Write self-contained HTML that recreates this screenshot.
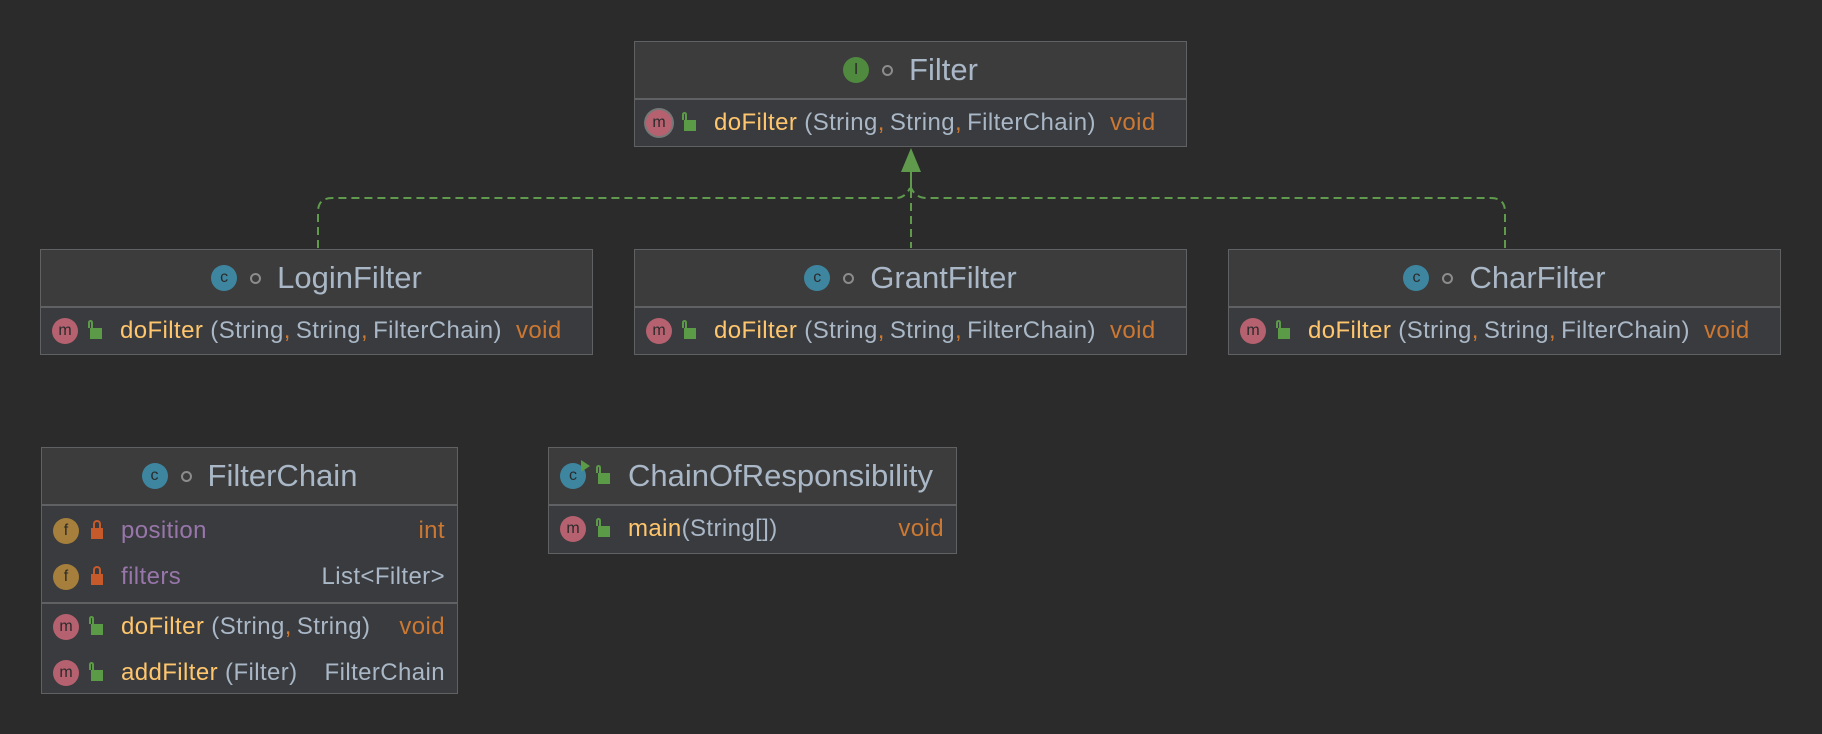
<!DOCTYPE html>
<html><head><meta charset="utf-8"><style>
body{margin:0;width:1822px;height:734px;background:#2b2b2b;overflow:hidden;font-family:"Liberation Sans",sans-serif;position:relative}
.box{position:absolute;border:1px solid #5f6163;background:#393b3e;box-sizing:border-box}
.hd{background:#3c3c3c;border-bottom:2px solid #5f6163;display:flex;align-items:center;justify-content:center;color:#a9b7c6;font-size:31px;box-sizing:border-box}
.row{display:flex;align-items:center;font-size:24px;letter-spacing:0.4px;color:#a9b7c6;white-space:nowrap;position:relative}
.ic{width:26px;height:26px;border-radius:50%;display:inline-flex;align-items:center;justify-content:center;color:#2b2b2b;font-size:16px;flex:none;letter-spacing:0}
.c{background:#3e86a0}.i{background:#4f8a3f}.m{background:#b6616f}.f{background:#a67f3c}
.dot{width:7px;height:7px;border:2px solid #8c8c8c;border-radius:50%;margin:0 16px 0 13px}
.lk{width:12px;height:11px;background:#5b9a46;position:relative;flex:none;margin:4px 0 0 0}
.lk:before{content:"";position:absolute;left:-2px;top:-8px;width:5px;height:8px;border:2px solid #5b9a46;border-bottom:none;border-radius:4px 4px 0 0;box-sizing:border-box}
.lk.r{background:#c75a2a}.lk.r:before{border-color:#c75a2a;left:2px;width:8px}
.y{color:#ffc66d}.o{color:#cc7832}.p{color:#9876aa}
.rt{position:absolute;right:12px}
.g1{width:12px}.g2{width:18px}
.cm{margin-right:5px}
</style></head><body>
<svg width="1822" height="734" style="position:absolute;left:0;top:0">
<g stroke="#5f9a4d" stroke-width="2" fill="none">
<path d="M318 248 V212 Q318 198 332 198 H896 Q905 198 910 188" stroke-dasharray="8 5"/>
<path d="M1505 248 V212 Q1505 198 1491 198 H926 Q916 198 911 188" stroke-dasharray="8 5"/>
<path d="M911 190 V248" stroke-dasharray="8 5"/>
<path d="M911 172 V190"/>
</g>
<polygon points="911,148 901,172 921,172" fill="#5f9a4d"/>
</svg>

<div class="box" style="left:634px;top:41px;width:553px;height:106px">
<div class="hd" style="height:58px"><span class="ic i">I</span><span class="dot"></span>Filter</div>
<div class="row" style="height:46px;padding-left:11px"><span class="ic m" style="box-shadow:0 0 0 2px #777">m</span><span class="g1"></span><span class="lk"></span><span class="g2"></span><span class="y">doFilter</span>&nbsp;(String<span class="o cm">,</span>String<span class="o cm">,</span>FilterChain)&nbsp;&nbsp;<span class="o">void</span></div>
</div>

<div class="box" style="left:40px;top:249px;width:553px;height:106px">
<div class="hd" style="height:58px"><span class="ic c">c</span><span class="dot"></span>LoginFilter</div>
<div class="row" style="height:46px;padding-left:11px"><span class="ic m">m</span><span class="g1"></span><span class="lk"></span><span class="g2"></span><span class="y">doFilter</span>&nbsp;(String<span class="o cm">,</span>String<span class="o cm">,</span>FilterChain)&nbsp;&nbsp;<span class="o">void</span></div>
</div>

<div class="box" style="left:634px;top:249px;width:553px;height:106px">
<div class="hd" style="height:58px"><span class="ic c">c</span><span class="dot"></span>GrantFilter</div>
<div class="row" style="height:46px;padding-left:11px"><span class="ic m">m</span><span class="g1"></span><span class="lk"></span><span class="g2"></span><span class="y">doFilter</span>&nbsp;(String<span class="o cm">,</span>String<span class="o cm">,</span>FilterChain)&nbsp;&nbsp;<span class="o">void</span></div>
</div>

<div class="box" style="left:1228px;top:249px;width:553px;height:106px">
<div class="hd" style="height:58px"><span class="ic c">c</span><span class="dot"></span>CharFilter</div>
<div class="row" style="height:46px;padding-left:11px"><span class="ic m">m</span><span class="g1"></span><span class="lk"></span><span class="g2"></span><span class="y">doFilter</span>&nbsp;(String<span class="o cm">,</span>String<span class="o cm">,</span>FilterChain)&nbsp;&nbsp;<span class="o">void</span></div>
</div>

<div class="box" style="left:41px;top:447px;width:417px;height:247px">
<div class="hd" style="height:58px"><span class="ic c">c</span><span class="dot"></span>FilterChain</div>
<div style="border-bottom:2px solid #5f6163;padding:2px 0">
<div class="row" style="height:46px;padding-left:11px"><span class="ic f">f</span><span class="g1"></span><span class="lk r"></span><span class="g2"></span><span class="p">position</span><span class="rt o">int</span></div>
<div class="row" style="height:46px;padding-left:11px"><span class="ic f">f</span><span class="g1"></span><span class="lk r"></span><span class="g2"></span><span class="p">filters</span><span class="rt">List&lt;Filter&gt;</span></div>
</div>
<div class="row" style="height:46px;padding-left:11px"><span class="ic m">m</span><span class="g1"></span><span class="lk"></span><span class="g2"></span><span class="y">doFilter</span>&nbsp;(String<span class="o cm">,</span>String)<span class="rt o">void</span></div>
<div class="row" style="height:46px;padding-left:11px"><span class="ic m">m</span><span class="g1"></span><span class="lk"></span><span class="g2"></span><span class="y">addFilter</span>&nbsp;(Filter)<span class="rt">FilterChain</span></div>
</div>

<div class="box" style="left:548px;top:447px;width:409px;height:107px">
<div class="hd" style="height:58px;justify-content:flex-start;padding-left:11px"><span class="ic c" style="position:relative">c<span style="position:absolute;right:-4px;top:-3px;border-left:9px solid #5b9a46;border-top:6px solid transparent;border-bottom:6px solid transparent"></span></span><span class="g1"></span><span class="lk"></span><span style="width:18px"></span>ChainOfResponsibility</div>
<div class="row" style="height:46px;padding-left:11px"><span class="ic m">m</span><span class="g1"></span><span class="lk"></span><span class="g2"></span><span class="y">main</span>(String[])<span class="rt o">void</span></div>
</div>
</body></html>
